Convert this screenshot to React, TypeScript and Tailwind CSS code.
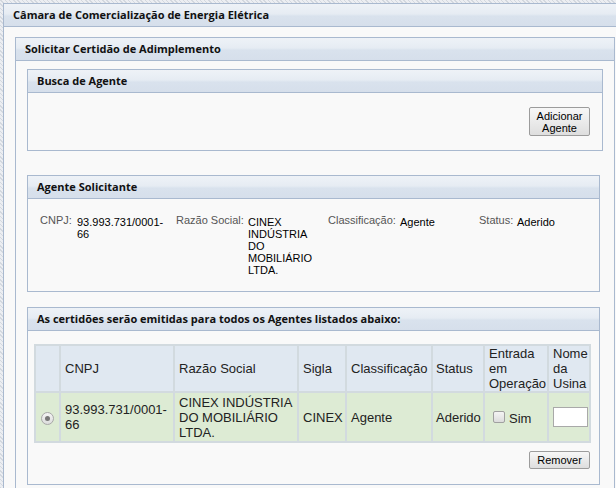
import React from 'react';

const panelHead =
  "flex items-center h-[23px] border-b border-[#a9b9cf] bg-[linear-gradient(to_bottom,#eef2f7_0%,#e6ecf3_45%,#d9e2ed_55%,#d6dfeb_100%)] pl-[9px] font-['Open_Sans',sans-serif] font-bold text-[11px] text-[#111] whitespace-nowrap";

const btn =
  "border border-[#9c9c9c] rounded-[2px] bg-[linear-gradient(to_bottom,#f7f7f7,#dedede)] text-[11px] leading-[12px] text-black";

const Panel = ({
  title,
  className = '',
  children
}: {
  title: string;
  className?: string;
  children: React.ReactNode;
}) => (
  <div className={`border border-[#a9b9cf] bg-[#f9f9f9] ${className}`}>
    <div className={panelHead}>{title}</div>
    {children}
  </div>
);

const Field = ({ label }: { label: string }) => (
  <div className="text-[#555] whitespace-nowrap">{label}</div>
);

const cols = [23, 112, 122, 46, 84, 50, 62];

export default function App() {
  return (
    <div className="w-[616px] h-[488px] overflow-hidden pl-[3px] pt-[3px] bg-[repeating-linear-gradient(45deg,#d3d8df_0px,#d3d8df_1px,#eceef2_1px,#eceef2_3px)] font-['Liberation_Sans',Arial,sans-serif]">
      <div className="h-[500px] w-[640px] border-l border-t border-[#a9b9cf] bg-[#f9f9f9]">
        <div className={panelHead}>Câmara de Comercialização de Energia Elétrica</div>

        <div className="pl-[11px] pt-[10px]">
          <div className="w-[600px] border border-[#a9b9cf] bg-[#f9f9f9] h-[470px]">
            <div className={panelHead}>Solicitar Certidão de Adimplemento</div>

            <div className="pl-[11px] pt-[8px]">
              {/* Busca de Agente */}
              <Panel title="Busca de Agente" className="w-[576px]">
                <div className="h-[57px] flex justify-end items-start pt-[14px] pr-[12px]">
                  <button className={`${btn} w-[61px] h-[29px] flex flex-col items-center justify-center`}>
                    <span>Adicionar</span>
                    <span>Agente</span>
                  </button>
                </div>
              </Panel>

              {/* Agente Solicitante */}
              <Panel title="Agente Solicitante" className="w-[573px] mt-[24px]">
                <div className="h-[92px] pt-[15px] pl-[12px]">
                  <div className="grid grid-cols-[37px_99px_72px_80px_72px_79px_38px_auto] text-[11px] leading-[12px]">
                    <Field label="CNPJ:" />
                    <div className="pt-[2px] pr-[6px] text-black">93.993.731/0001-66</div>
                    <Field label="Razão Social:" />
                    <div className="pt-[2px] pr-[4px] text-black">CINEX INDÚSTRIA DO MOBILIÁRIO LTDA.</div>
                    <Field label="Classificação:" />
                    <div className="pt-[2px] text-black">Agente</div>
                    <Field label="Status:" />
                    <div className="pt-[2px] text-black">Aderido</div>
                  </div>
                </div>
              </Panel>

              {/* Lista */}
              <Panel
                title="As certidões serão emitidas para todos os Agentes listados abaixo:"
                className="w-[573px] mt-[15px]"
              >
                <div className="h-[153px] pt-[13px] pl-[6px]">
                  <table className="table-fixed w-[557px] border-separate border-spacing-[2px] bg-[#d2dadf] text-[13px] leading-[15px] text-[#222]">
                    <colgroup>
                      {cols.map((w, i) => (
                        <col key={i} style={{ width: w }} />
                      ))}
                      <col />
                    </colgroup>
                    <thead>
                      <tr className="h-[45px] bg-[#e0e8f1]">
                        <th className="font-normal" />
                        <th className="font-normal text-left pl-[4px]">CNPJ</th>
                        <th className="font-normal text-left pl-[4px]">Razão Social</th>
                        <th className="font-normal text-left pl-[4px]">Sigla</th>
                        <th className="font-normal text-left pl-[4px]">Classificação</th>
                        <th className="font-normal text-left pl-[3px]">Status</th>
                        <th className="font-normal text-left pl-[4px]">Entrada em Operação</th>
                        <th className="font-normal text-left pl-[4px]">Nome da Usina</th>
                      </tr>
                    </thead>
                    <tbody>
                      <tr className="h-[48px] bg-[#ddebd4]">
                        <td className="text-center align-middle">
                          <span className="inline-flex w-[13px] h-[13px] rounded-full border border-[#a8a8a8] bg-[linear-gradient(to_bottom,#f4f4f4,#dcdcdc)] items-center justify-center align-middle mt-[2px]">
                            <span className="w-[5px] h-[5px] rounded-full bg-[#777]" />
                          </span>
                        </td>
                        <td className="pl-[4px]">93.993.731/0001-66</td>
                        <td className="pl-[4px]">CINEX INDÚSTRIA DO MOBILIÁRIO LTDA.</td>
                        <td className="pl-[4px]">CINEX</td>
                        <td className="pl-[4px]">Agente</td>
                        <td className="pl-[3px]">Aderido</td>
                        <td className="pl-[8px]">
                          <span className="flex items-center gap-[4px]">
                            <span className="w-[12px] h-[12px] rounded-[2px] border border-[#a0a0a0] bg-[linear-gradient(to_bottom,#f4f4f4,#dcdcdc)]" />
                            <span className="mt-[3px]">Sim</span>
                          </span>
                        </td>
                        <td className="pl-[4px]">
                          <input
                            type="text"
                            className="block w-[35px] h-[20px] bg-white border border-[#a9a9a9] outline-none"
                          />
                        </td>
                      </tr>
                    </tbody>
                  </table>
                  <div className="w-[557px] flex justify-end mt-[8px] pr-[1px]">
                    <button className={`${btn} w-[61px] h-[18px]`}>Remover</button>
                  </div>
                </div>
              </Panel>
            </div>
          </div>
        </div>
      </div>
    </div>
  );
}
